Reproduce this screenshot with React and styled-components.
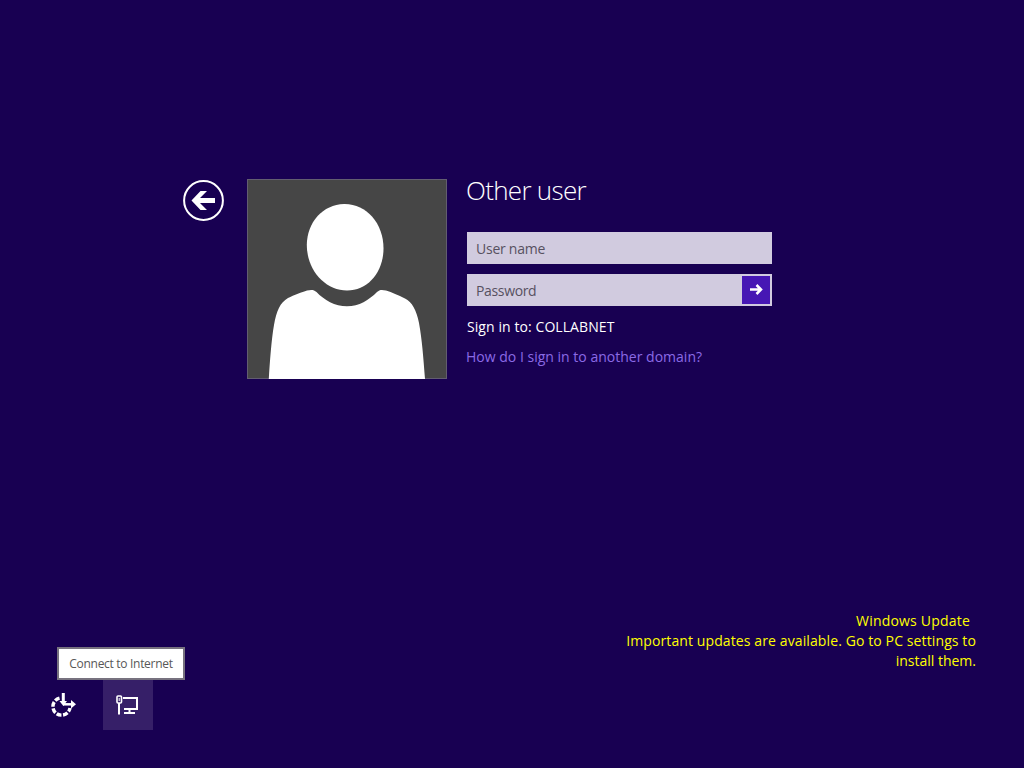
import React, { useState } from "react";
import styled, { createGlobalStyle } from "styled-components";


function App() {
  const [user, setUser] = useState('');
  const [password, setPassword] = useState('');

  function handleSubmit(e) {
    e.preventDefault();
    setPassword('');
  }

  return (
    <Screen>
      <GlobalStyle />
      <LoginSection>
        <BackButton type="button" aria-label="Back">
          <svg width="41" height="41" viewBox="0 0 41 41">
            <circle cx="20.5" cy="20.5" r="19.4" fill="none" stroke="#fff" strokeWidth="2" />
            <path d="M8.5 20.5L17.5 11H24L17 18H32V23H17L24 30H17.5Z" fill="#fff" />
          </svg>
        </BackButton>
        <Avatar>
          <svg width="200" height="200" viewBox="0 0 200 200">
            <path d="M97 25C119 24.500 136.500 44 136.500 69.500C136.500 93 121 111.500 100 111.500C78 111.500 59.800 91 59.800 66C60 43 76 25.500 97 25Z" fill="#fff" />
            <path d="M21.800 200C23 181 24.500 160 27 146C29.500 132 33 123.500 41 119C47 116 55 113 60 111.500C64 110.500 67 110.500 69.500 113C77 121 88 127.300 100 127.300C112 127.300 122 121 130 113C132.500 110.500 135 110.500 139 111.500C145 113.500 151 116 158 119.500C165 123 169.500 131 172 144C175 160 176.500 180 178 200Z" fill="#fff" />
          </svg>
        </Avatar>
        <Form onSubmit={handleSubmit}>
          <Title>Other user</Title>
          <Field>
            <Input
              type="text"
              placeholder="User name"
              value={user}
              onChange={(e) => {
                setUser(e.target.value);
              }} />
          </Field>
          <Field>
            <Input
              type="password"
              placeholder="Password"
              $spacing="-0.35px"
              value={password}
              onChange={(e) => {
                setPassword(e.target.value);
              }} />
            <SubmitButton type="submit" aria-label="Sign in">
              <svg width="28" height="28" viewBox="0 0 28 28">
                <path d="M8 13.500H19M14.500 9L19 13.500L14.500 18" fill="none" stroke="#fff" strokeWidth="2.500" />
              </svg>
            </SubmitButton>
          </Field>
          <Domain>Sign in to: COLLABNET</Domain>
          <HelpLink>How do I sign in to another domain?</HelpLink>
        </Form>
      </LoginSection>

      <Footer>
        <Tools>
          <ToolButton type="button" aria-label="Ease of access">
            <svg width="50" height="50" viewBox="0 0 50 50">
              <path d="M21.500 18.200A8.600 8.600 0 1 0 32 28" fill="none" stroke="#fff" strokeWidth="3.400" strokeDasharray="5 1.600" />
              <path d="M25.300 13V23" stroke="#fff" strokeWidth="3" />
              <path d="M21.500 21L25.300 26L29 21Z" fill="#fff" />
              <path d="M25 24.300H35" stroke="#fff" strokeWidth="2.500" />
              <path d="M33 20L38 24.300L33 28.600Z" fill="#fff" />
            </svg>
          </ToolButton>
          <ToolButton type="button" aria-label="Network" $active>
            <svg width="50" height="50" viewBox="0 0 50 50" fill="none" stroke="#fff">
              <rect x="14" y="16" width="4.500" height="7" rx="1" strokeWidth="1.600" />
              <path d="M16.200 18V21" strokeWidth="1" />
              <path d="M16 23V34.500" strokeWidth="2" />
              <path d="M20 18H34V29H21M26.500 29V33M21 33H32" strokeWidth="2" />
            </svg>
            <Tooltip>Connect to Internet</Tooltip>
          </ToolButton>
        </Tools>
        <Update>
          <UpdateTitle>Windows Update</UpdateTitle>
          <UpdateText $spacing="0.11px">Important updates are available. Go to PC settings to</UpdateText>
          <UpdateText $spacing="0px">install them.</UpdateText>
        </Update>
      </Footer>
    </Screen>
  )
}

const GlobalStyle = createGlobalStyle`
  * {
    box-sizing: border-box;
  }
  body {
    margin: 0;
    background: #180052;
  }
  button, input {
    font-family: inherit;
    border: 0;
    padding: 0;
  }
`;

const Screen = styled.main`
  display: flex;
  flex-direction: column;
  justify-content: space-between;
  width: 1024px;
  height: 768px;
  padding: 179px 48px 38px 53px;
  overflow: hidden;
  background: #180052;
  color: #fff;
  font-family: "Open Sans", "Noto Sans", sans-serif;
  font-size: 14px;
`;
const LoginSection = styled.section`
  display: flex;
  align-items: flex-start;
  padding-left: 130px;
`;
const BackButton = styled.button`
  width: 41px;
  height: 41px;
  margin: 1px 23px 0 0;
  background: transparent;
  svg {
    display: block;
  }
`;
const Avatar = styled.div`
  width: 200px;
  height: 200px;
  margin-right: 20px;
  background: #464646;
  box-shadow: inset 0 0 0 1px #625d70;
  svg {
    display: block;
  }
`;
const Form = styled.form`
  display: flex;
  flex-direction: column;
  width: 305px;
`;
const Title = styled.h1`
  margin: -8px 0 23px -1px;
  font-size: 26px;
  font-weight: 300;
  line-height: 38px;
  letter-spacing: -0.7px;
  white-space: nowrap;
`;
const Field = styled.div`
  display: flex;
  align-items: center;
  height: 32px;
  margin-bottom: 10px;
  padding: 0 2px 0 9px;
  background: #d1cbdf;
`;
const Input = styled.input`
  flex: 1;
  min-width: 0;
  height: 28px;
  background: transparent;
  outline: none;
  color: #222;
  font-size: 14px;
  letter-spacing: ${(props) => props.$spacing || '-0.25px'};
  &::placeholder {
    color: #57515f;
    opacity: 1;
  }
`;
const SubmitButton = styled.button`
  width: 28px;
  height: 28px;
  background: #4617b4;
  svg {
    display: block;
  }
`;
const Domain = styled.div`
  margin-top: 1px;
  line-height: 20px;
  letter-spacing: 0.08px;
`;
const HelpLink = styled.a`
  margin: 10px 0 0 -1px;
  color: #8b6ae6;
  line-height: 20px;
  letter-spacing: 0.01px;
  white-space: nowrap;
`;
const Footer = styled.footer`
  display: flex;
  justify-content: space-between;
  align-items: flex-end;
`;
const Tools = styled.div`
  display: flex;
  margin-left: -15px;
  gap: 15px;
`;
const ToolButton = styled.button`
  position: relative;
  width: 50px;
  height: 50px;
  background: ${(props) => (props.$active ? '#361f68' : 'transparent')};
  svg {
    display: block;
  }
`;
const Tooltip = styled.span`
  position: absolute;
  left: -46px;
  bottom: 50px;
  width: 128px;
  height: 33px;
  border: 2px solid #77727f;
  background: #fff;
  color: #575757;
  font-size: 12px;
  line-height: 29px;
  letter-spacing: -0.3px;
  text-align: center;
  white-space: nowrap;
`;
const Update = styled.div`
  display: flex;
  flex-direction: column;
  align-items: flex-end;
  padding-bottom: 59px;
  color: #ffff00;
  line-height: 20px;
`;
const UpdateTitle = styled.div`
  margin-right: 6px;
  letter-spacing: 0.2px;
`;
const UpdateText = styled.div`
  letter-spacing: ${(props) => props.$spacing};
  white-space: nowrap;
`;
export default App;
